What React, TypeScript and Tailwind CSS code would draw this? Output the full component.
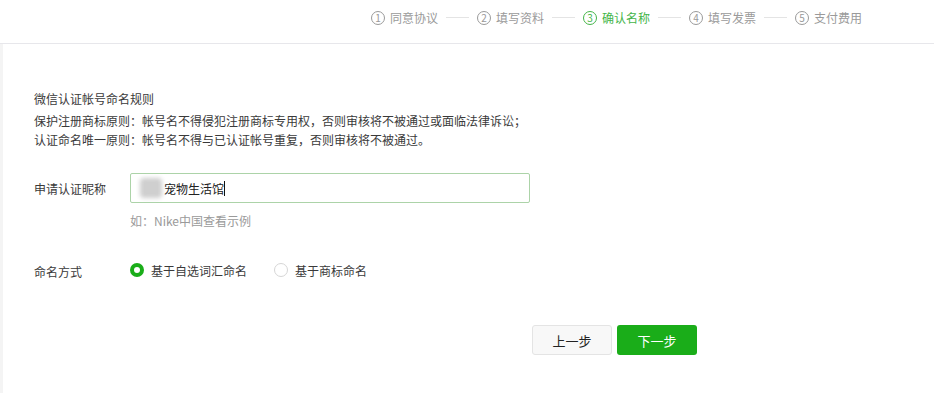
const steps = [
  { n: "1", label: "同意协议" },
  { n: "2", label: "填写资料" },
  { n: "3", label: "确认名称", active: true },
  { n: "4", label: "填写发票" },
  { n: "5", label: "支付费用" },
]

const Step = ({ n, label, active }: { n: string; label: string; active?: boolean }) => (
  <div className={`flex items-center gap-[5px] ${active ? "text-[#44b549]" : "text-[#9a9a9a]"}`}>
    <span className="w-[14px] h-[14px] rounded-full border border-current flex items-center justify-center text-[10px] leading-none">
      {n}
    </span>
    <span>{label}</span>
  </div>
)

export default function App() {
  return (
    <div className="w-[934px] h-[393px] bg-white text-[12px] leading-[19px] text-[#3a3a3a] font-['Noto_Sans_CJK_SC','Microsoft_YaHei',sans-serif] flex flex-col">
      <div className="h-[44px] border-b border-[#e7e7eb] flex items-center justify-end pr-[72px] pb-[8px]">
        {steps.map((s, i) => (
          <div key={s.n} className="flex items-center">
            {i > 0 && <div className="w-[23px] h-px bg-[#e4e4e4] mx-[8px]" />}
            <Step {...s} />
          </div>
        ))}
      </div>

      <div className="flex-1 border-l-[3px] border-[#f4f4f4] pl-[31px] pt-[45px]">
        <div className="mb-[3px]">微信认证帐号命名规则</div>
        <div>保护注册商标原则：帐号名不得侵犯注册商标专用权，否则审核将不被通过或面临法律诉讼；</div>
        <div>认证命名唯一原则：帐号名不得与已认证帐号重复，否则审核将不被通过。</div>

        <div className="flex items-center mt-[24px]">
          <div className="w-[96px]">申请认证昵称</div>
          <div className="w-[400px] h-[30px] border border-[#acd3a8] rounded-[2px] flex items-center pl-[9px]">
            <div className="w-[22px] h-[20px] rounded-[4px] bg-[#cfcfcf] blur-[2px] mr-[2px]" />
            <span className="text-[#222]">宠物生活馆</span>
            <span className="w-px h-[15px] bg-[#111]" />
          </div>
        </div>
        <div className="ml-[96px] mt-[8px] text-[#9a9a9a]">如：Nike中国查看示例</div>

        <div className="flex items-center mt-[29px]">
          <div className="w-[96px] pt-[3px]">命名方式</div>
          <label className="flex items-center gap-[7px]">
            <span className="w-[14px] h-[14px] rounded-full bg-[#1aad19] flex items-center justify-center">
              <span className="w-[6px] h-[6px] rounded-full bg-white" />
            </span>
            <span>基于自选词汇命名</span>
          </label>
          <label className="flex items-center gap-[7px] ml-[27px]">
            <span className="w-[14px] h-[14px] rounded-full border border-[#d6d6d6] bg-white" />
            <span>基于商标命名</span>
          </label>
        </div>

        <div className="flex gap-[5px] mt-[44px] ml-[498px]">
          <button className="w-[80px] h-[30px] bg-[#f8f8f8] border border-[#e4e4e4] rounded-[3px] text-[#222] text-[13px]">
            上一步
          </button>
          <button className="w-[80px] h-[30px] bg-[#1aad19] rounded-[3px] text-white text-[13px]">
            下一步
          </button>
        </div>
      </div>
    </div>
  )
}
